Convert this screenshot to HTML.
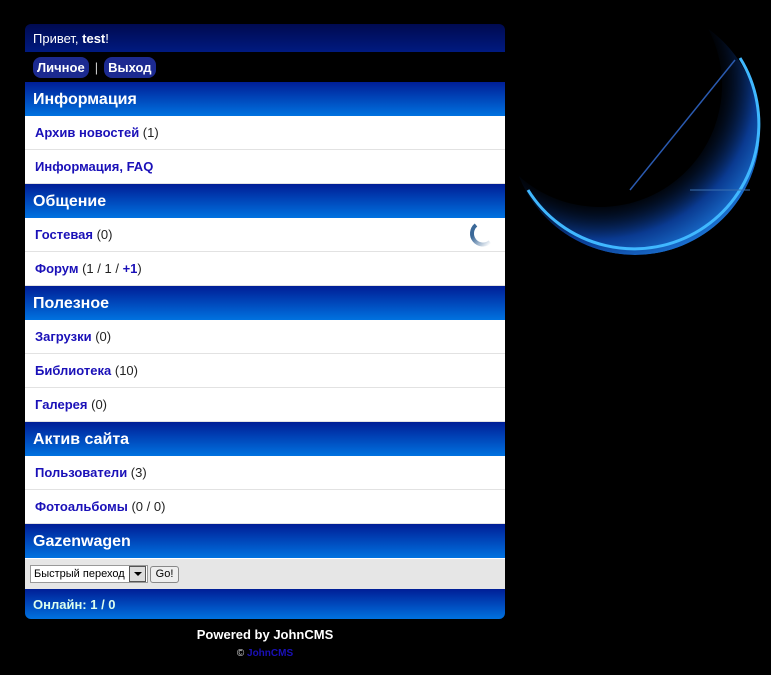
<!DOCTYPE html>
<html><head><meta charset="utf-8"><style>
body{margin:0;background:#000;width:771px;height:675px;overflow:hidden;font-family:"Liberation Sans",sans-serif;position:relative}
#w{position:absolute;left:25px;top:24px;width:480px}
.top{height:28px;background:linear-gradient(#000a50,#001a80);border-radius:6px 6px 0 0;color:#fff;font-size:13px;line-height:30px;padding-left:8px;box-sizing:border-box}
.nav{height:30px;background:#000;color:#fff;font-size:13px;padding-left:8px;display:flex;align-items:center}
.btn{background:#1c2a90;border-radius:8px;padding:3px 4px;font-weight:bold;color:#fff}
.sep{margin:0 6px;color:#ccc}
.h{height:34px;background:linear-gradient(#001e96,#0072e0);color:#fff;font-weight:bold;font-size:16px;line-height:35px;padding-left:8px}
.r{height:33px;background:#fff;border-bottom:1px solid #e2e2e2;font-size:13px;line-height:34px;padding-left:10px;color:#222;position:relative}
.r b{color:#1a10b8}
.f{height:31px;background:#e6e6e6;border-top:1px solid #fff;box-sizing:border-box;display:flex;align-items:center;padding-left:5px;font-size:11px}
.sel{border:1px solid #999;background:#fff;height:16px;display:flex;align-items:center;padding-left:3px}
.ar{width:15px;height:14px;border:1px solid #555;margin:0 1px 0 4px;background:#ddd;position:relative}
.ar:after{content:"";position:absolute;left:4px;top:5px;border:4px solid transparent;border-top:4px solid #000;border-bottom:0}
.go{border:1px solid #888;border-radius:3px;background:#eee;height:15px;line-height:15px;padding:0 5px;margin-left:2px}
.on{height:30px;background:linear-gradient(#001e96,#0072e0);border-radius:0 0 6px 6px;color:#dfe;font-weight:bold;font-size:13px;line-height:32px;padding-left:8px}
</style></head><body>
<svg style="position:absolute;left:500px;top:0" width="271" height="290">
<defs><radialGradient id="g" cx="0.35" cy="0.3" r="0.75"><stop offset="0.6" stop-color="#000" stop-opacity="0"/><stop offset="0.85" stop-color="#0a3a90"/><stop offset="1" stop-color="#1a70d0"/></radialGradient>
<linearGradient id="sp" x1="0" y1="0" x2="1" y2="1"><stop offset="0" stop-color="#3a6898"/><stop offset="1" stop-color="#fff"/></linearGradient>
<mask id="m"><circle cx="135" cy="130" r="125" fill="#fff"/><circle cx="100" cy="85" r="122" fill="#000"/></mask></defs>
<g mask="url(#m)"><circle cx="135" cy="130" r="125" fill="url(#g)"/></g>
<path d="M28 190 A124 124 0 0 0 240 58" fill="none" stroke="#40b8ff" stroke-width="3"/>
<line x1="130" y1="190" x2="235" y2="60" stroke="#2a5ab0" stroke-width="1.5"/>
<line x1="190" y1="190" x2="250" y2="190" stroke="#3a70b0" stroke-width="1"/>
</svg>
<div id="w">
<div class="top">Привет, <b>test</b>!</div>
<div class="nav"><span class="btn">Личное</span><span class="sep">|</span><span class="btn">Выход</span></div>
<div class="h">Информация</div>
<div class="r"><b>Архив новостей</b> (1)</div>
<div class="r"><b>Информация, FAQ</b></div>
<div class="h">Общение</div>
<div class="r"><b>Гостевая</b> (0)<svg style="position:absolute;left:437px;top:2px" width="32" height="32"><defs><linearGradient id="sp2" x1="0" y1="0" x2="1" y2="1"><stop offset="0.3" stop-color="#3a6898"/><stop offset="1" stop-color="#fff"/></linearGradient></defs><path d="M14 5 A11 11 0 1 0 28 22" fill="none" stroke="url(#sp2)" stroke-width="4"/></svg></div>
<div class="r"><b>Форум</b> (1 / 1 / <b>+1</b>)</div>
<div class="h">Полезное</div>
<div class="r"><b>Загрузки</b> (0)</div>
<div class="r"><b>Библиотека</b> (10)</div>
<div class="r"><b>Галерея</b> (0)</div>
<div class="h">Актив сайта</div>
<div class="r"><b>Пользователи</b> (3)</div>
<div class="r"><b>Фотоальбомы</b> (0 / 0)</div>
<div class="h">Gazenwagen</div>
<div class="f"><div class="sel">Быстрый переход<div class="ar"></div></div><div class="go">Go!</div></div>
<div class="on">Онлайн: 1 / 0</div>
<div style="text-align:center;color:#fff;font-weight:bold;font-size:13px;margin-top:8px">Powered by JohnCMS</div>
<div style="text-align:center;color:#ddd;font-size:10px;margin-top:6px">© <b style="color:#1a10b8">JohnCMS</b></div>
</div>
</body></html>
